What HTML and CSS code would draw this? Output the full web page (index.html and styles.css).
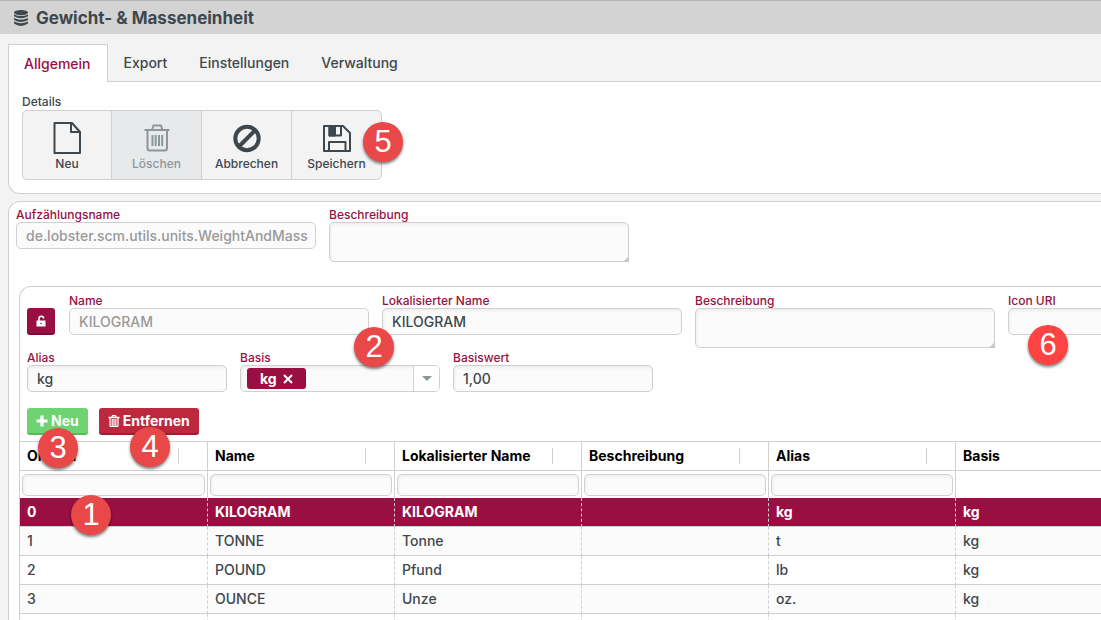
FILE: index.html
```html
<!DOCTYPE html>
<html lang="de">
<head>
<meta charset="utf-8">
<title>Gewicht- &amp; Masseneinheit</title>
<link rel="stylesheet" href="styles.css">
</head>
<body>
<header class="titlebar">
  <svg class="db-icon" viewBox="0 0 14 16" aria-hidden="true">
    <ellipse cx="7" cy="2.6" rx="7" ry="2.6"/>
    <path d="M0 4.4q7 3.4 14 0v1.9q-7 4-14 0zM0 8q7 3.4 14 0v1.9q-7 4-14 0zM0 11.6q7 3.4 14 0v2q-7 4.600-14 0z"/>
  </svg>
  <h1 class="title">Gewicht- &amp; Masseneinheit</h1>
</header>

<nav class="tabs" role="tablist">
  <button class="tab tab-active" role="tab" aria-selected="true">Allgemein</button>
  <button class="tab" role="tab">Export</button>
  <button class="tab" role="tab">Einstellungen</button>
  <button class="tab" role="tab">Verwaltung</button>
</nav>

<section class="panel panel-tools">
  <h2 class="tools-label">Details</h2>
  <div class="toolbar">
    <button class="tool">
      <svg class="tool-icon" viewBox="0 0 34 34" fill="none" stroke="currentColor" stroke-width="2" stroke-linejoin="round" aria-hidden="true"><path d="M4.500 2H22l8 9v21H4.500zM21 2v9h9"/></svg>
      Neu
    </button>
    <button class="tool" disabled>
      <svg class="tool-icon" viewBox="0 0 34 34" fill="none" stroke="currentColor" stroke-width="2" aria-hidden="true"><path d="M4.500 9h25"/><path d="M12 9l1.500-4.500h7.500L22.500 9M7.500 9v18q0 2.500 2.500 2.500h14.500q2.500 0 2.500-2.500V9M12.500 14v11M15.700 14v11M19 14v11M22.200 14v11"/></svg>
      Löschen
    </button>
    <button class="tool">
      <svg class="tool-icon" viewBox="0 0 34 34" fill="none" stroke="currentColor" stroke-width="4" aria-hidden="true"><circle cx="17" cy="17.500" r="11.700"/><path d="M9 25.500l16-16"/></svg>
      Abbrechen
    </button>
    <button class="tool">
      <svg class="tool-icon" viewBox="0 0 34 34" fill="none" stroke="currentColor" stroke-width="2" stroke-linejoin="round" aria-hidden="true"><path d="M4 5h19l7 7v18H4zM9.500 5v9.500H21V5M9 30v-9h16.500v9"/><path d="M9.500 5H15v9.500H9.500z" fill="currentColor"/></svg>
      Speichern
    </button>
  </div>
</section>

<main class="panel panel-main">
  <div class="row row-top">
    <label class="field">Aufzählungsname
      <input class="input" type="text" value="de.lobster.scm.utils.units.WeightAndMass" disabled>
    </label>
    <label class="field">Beschreibung
      <span class="area-wrap"><textarea class="input area"></textarea></span>
    </label>
  </div>

  <section class="group">
    <div class="row row-entry">
      <button class="lock" aria-label="Entsperren">
        <svg class="lock-icon" viewBox="0 0 12 12" aria-hidden="true"><path d="M1.500 5.500h9v6h-9z" fill="#fff"/><path d="M4 6V3.500a2.300 2.300 0 0 1 4.600 0" fill="none" stroke="#fff" stroke-width="1.600"/><circle cx="6" cy="8.500" r=".8" fill="#9a0f42"/></svg>
      </button>
      <label class="field">Name
        <input class="input" type="text" value="KILOGRAM" disabled>
      </label>
      <label class="field">Lokalisierter Name
        <input class="input" type="text" value="KILOGRAM">
      </label>
      <label class="field">Beschreibung
        <span class="area-wrap"><textarea class="input area"></textarea></span>
      </label>
      <label class="field">Icon URI
        <input class="input" type="text">
      </label>
    </div>

    <div class="row row-values">
      <label class="field field-short">Alias
        <input class="input" type="text" value="kg">
      </label>
      <div class="field field-short">Basis
        <div class="input combo">
          <button class="chip">kg
            <svg class="chip-x" viewBox="0 0 10 10" aria-hidden="true"><path d="M1 1l8 8M9 1L1 9" stroke="#fff" stroke-width="2"/></svg>
          </button>
          <button class="combo-arrow" aria-label="Auswahl öffnen"></button>
        </div>
      </div>
      <label class="field field-short">Basiswert
        <input class="input" type="text" value="1,00">
      </label>
    </div>

    <div class="actions">
      <button class="action action-new">
        <svg class="action-icon" viewBox="0 0 12 12" aria-hidden="true"><path d="M6 .5v11M.5 6h11" stroke="#fff" stroke-width="3.200"/></svg>Neu
      </button>
      <button class="action action-remove">
        <svg class="action-icon" viewBox="0 0 12 12" fill="none" stroke="#fff" aria-hidden="true"><path d="M.5 2.500h11M4 2l.5-1.300h3L8 2" stroke-width="1.300"/><path d="M2 3v7.500q0 1 1 1h6q1 0 1-1V3M4.200 4v7M6 4v7M7.800 4v7" stroke-width="1.200"/></svg>Entfernen
      </button>
    </div>

    <table class="grid">
      <colgroup><col class="col"><col class="col"><col class="col"><col class="col"><col class="col"><col></colgroup>
      <thead>
        <tr class="head-row">
          <th><span class="head">Ordinal</span></th>
          <th><span class="head">Name</span></th>
          <th><span class="head">Lokalisierter Name</span></th>
          <th><span class="head">Beschreibung</span></th>
          <th><span class="head">Alias</span></th>
          <th>Basis</th>
        </tr>
        <tr class="filter-row">
          <td><input class="filter" type="text" aria-label="Filter Ordinal"></td>
          <td><input class="filter" type="text" aria-label="Filter Name"></td>
          <td><input class="filter" type="text" aria-label="Filter Lokalisierter Name"></td>
          <td><input class="filter" type="text" aria-label="Filter Beschreibung"></td>
          <td><input class="filter" type="text" aria-label="Filter Alias"></td>
          <td></td>
        </tr>
      </thead>
      <tbody>
        <tr class="selected"><td>0</td><td>KILOGRAM</td><td>KILOGRAM</td><td></td><td>kg</td><td>kg</td></tr>
        <tr><td>1</td><td>TONNE</td><td>Tonne</td><td></td><td>t</td><td>kg</td></tr>
        <tr><td>2</td><td>POUND</td><td>Pfund</td><td></td><td>lb</td><td>kg</td></tr>
        <tr><td>3</td><td>OUNCE</td><td>Unze</td><td></td><td>oz.</td><td>kg</td></tr>
        <tr><td></td><td></td><td></td><td></td><td></td><td></td></tr>
      </tbody>
    </table>
  </section>
</main>

<span class="badge badge-1">1</span>
<span class="badge badge-2">2</span>
<span class="badge badge-3">3</span>
<span class="badge badge-4">4</span>
<span class="badge badge-5">5</span>
<span class="badge badge-6">6</span>
</body>
</html>
```
FILE: styles.css
```css
* { box-sizing: border-box; }

body {
  margin: 0;
  height: 100vh;
  overflow: hidden;
  position: relative;
  display: flex;
  flex-direction: column;
  background: #f3f3f3;
  color: #3e474d;
  font: 500 14px/16px Inter, "Open Sans", sans-serif;
}

button, input, textarea { font: inherit; color: inherit; }
button { cursor: pointer; }

.titlebar {
  flex: none;
  display: flex;
  align-items: center;
  gap: 8px;
  height: 34px;
  padding: 0 14px;
  border-top: 1px solid #b3b3b3;
  background: #d3d3d3;
}
.db-icon { width: 14px; height: 16px; fill: #3e474d; }
.title { margin: 0; font-size: 17px; line-height: 20px; font-weight: 700; }

.tabs {
  flex: none;
  display: flex;
  height: 38px;
  margin: 10px 0 0 8px;
  border-bottom: 1px solid #d0d0d0;
}
.tab {
  height: 38px;
  padding: 0 16px;
  border: 0;
  background: none;
}
.tab-active {
  padding: 0 16px 0 15px;
  border: 1px solid #d0d0d0;
  border-bottom: 0;
  background: #fff;
  color: #9a0f42;
}

.panel {
  margin-left: 8px;
  border: 1px solid #d0d0d0;
  border-right: 0;
  background: #fff;
}
.panel-tools {
  flex: none;
  padding: 12px 13px 13px;
  border-top: 0;
  border-bottom-left-radius: 12px;
}
.tools-label { margin: 0; font-size: 12px; line-height: 16px; font-weight: 500; }
.toolbar {
  display: inline-flex;
  height: 70px;
  border: 1px solid #d0d0d0;
  border-radius: 5px;
  overflow: hidden;
  background: #f3f3f3;
  vertical-align: top;
}
.tool {
  display: flex;
  flex-direction: column;
  align-items: center;
  gap: 1px;
  width: 90px;
  padding: 10px 0 0;
  border: 0;
  border-right: 1px solid #d0d0d0;
  background: none;
  font-size: 12px;
  line-height: 16px;
}
.tool:first-child { width: 89px; }
.tool:last-child { width: 89px; border-right: 0; }
.tool:disabled { background: #e7e9eb; color: #8c979c; cursor: default; }
.tool-icon { width: 34px; height: 34px; }

.panel-main {
  flex: 1;
  margin-top: 7px;
  padding: 5px 0 0 7px;
  border-bottom: 0;
  border-top-left-radius: 12px;
}
.row { display: flex; align-items: flex-start; gap: 13px; }
.row-top { min-height: 79px; }

.field {
  flex: none;
  width: 300px;
  color: #9a0f42;
  font-size: 12px;
  line-height: 15px;
}
.field-short { width: 200px; }

.input {
  display: block;
  width: 100%;
  height: 27px;
  padding: 0 0 0 9px;
  border: 1px solid #d0d0d0;
  border-radius: 5px;
  background: #fbfbfb;
  box-shadow: inset 1px 2px 3px #eeeeee;
  color: #3e474d;
  font-size: 14px;
}
.input:disabled { box-shadow: none; color: #999; }
.area { height: 40px; padding: 4px 9px; resize: none; }
.area-wrap { display: block; position: relative; }
.area-wrap::after {
  content: "";
  position: absolute;
  right: 0;
  bottom: 0;
  border: 3px solid #c8c8c8;
  border-top-color: transparent;
  border-left-color: transparent;
}

.group {
  margin-left: 3px;
  border: 1px solid #d0d0d0;
  border-width: 1px 0 0 1px;
  border-top-left-radius: 12px;
}
.row-entry { padding: 6px 0 0 7px; }
.lock {
  flex: none;
  display: grid;
  place-items: center;
  width: 28px;
  height: 27px;
  margin: 15px 1px 0 0;
  padding: 0;
  border: 0;
  border-bottom: 2px solid #7c0c35;
  border-radius: 3px;
  background: #9a0f42;
}
.lock-icon { width: 12px; height: 12px; }
.row-values { padding: 2px 0 0 7px; }

.combo { display: flex; align-items: center; padding: 0 0 0 6px; }
.chip {
  display: flex;
  align-items: center;
  gap: 6px;
  height: 21px;
  padding: 0 13px;
  border: 0;
  border-radius: 3px;
  background: #9a0f42;
  color: #fff;
  font-weight: 700;
}
.chip-x { width: 10px; height: 10px; }
.combo-arrow {
  display: grid;
  place-items: center;
  width: 26px;
  height: 25px;
  margin-left: auto;
  padding: 0;
  border: 0;
  border-left: 1px solid #d0d0d0;
  border-radius: 0 4px 4px 0;
  background: #fff;
}
.combo-arrow::after {
  content: "";
  border: 5px solid transparent;
  border-top: 5px solid #8c979c;
  border-bottom: 0;
}

.actions { display: flex; gap: 11px; padding: 16px 0 6px 7px; }
.action {
  display: flex;
  align-items: center;
  gap: 3px;
  height: 27px;
  padding: 0 9px;
  border: 0;
  border-radius: 3px;
  color: #fff;
  font-weight: 700;
}
.action-new { border-bottom: 2px solid #58b85a; background: #6fd372; }
.action-remove { border-bottom: 2px solid #98202f; background: #be283e; }
.action-icon { width: 12px; height: 12px; }

.grid {
  width: 100%;
  table-layout: fixed;
  border-collapse: separate;
  border-spacing: 0;
  border-top: 1px solid #d0d0d0;
}
.col { width: 187px; }
.grid th, .grid td {
  height: 29px;
  padding: 0 7px;
  border-bottom: 1px solid #d0d0d0;
  text-align: left;
}
.grid th + th, .grid .filter-row td + td { border-left: 1px solid #d0d0d0; }
.grid tbody td + td { border-left: 1px dashed #d0d0d0; }
.grid th { padding-right: 28px; color: #000; font-weight: 700; white-space: nowrap; }
.head { display: block; border-right: 1px solid #d0d0d0; }
.grid .filter-row td { height: 27px; padding: 0 2px; border-bottom: 0; }
.filter {
  display: block;
  width: 100%;
  height: 22px;
  border: 1px solid #d0d0d0;
  border-radius: 5px;
  background: #fbfbfb;
  box-shadow: inset 1px 2px 3px #eeeeee;
}
.grid tbody tr:nth-child(even) { background: #fbfbfb; }
.grid .selected { background: #9a0f42; color: #fff; font-weight: 700; }

/* Numbered callouts lie over the form */
.badge {
  position: absolute;
  display: grid;
  place-items: center;
  width: 40px;
  height: 40px;
  border-radius: 50%;
  background: #e94848;
  box-shadow: 0 2px 3px rgba(0, 0, 0, .5);
  color: #fff;
  font: 400 31px/40px "Liberation Sans", sans-serif;
}
.badge-1 { left: 71px; top: 495px; }
.badge-2 { left: 354px; top: 327px; }
.badge-3 { left: 38px; top: 428px; }
.badge-4 { left: 130px; top: 427px; }
.badge-5 { left: 363px; top: 122px; }
.badge-6 { left: 1028px; top: 325px; background: #ff4343; }
```
